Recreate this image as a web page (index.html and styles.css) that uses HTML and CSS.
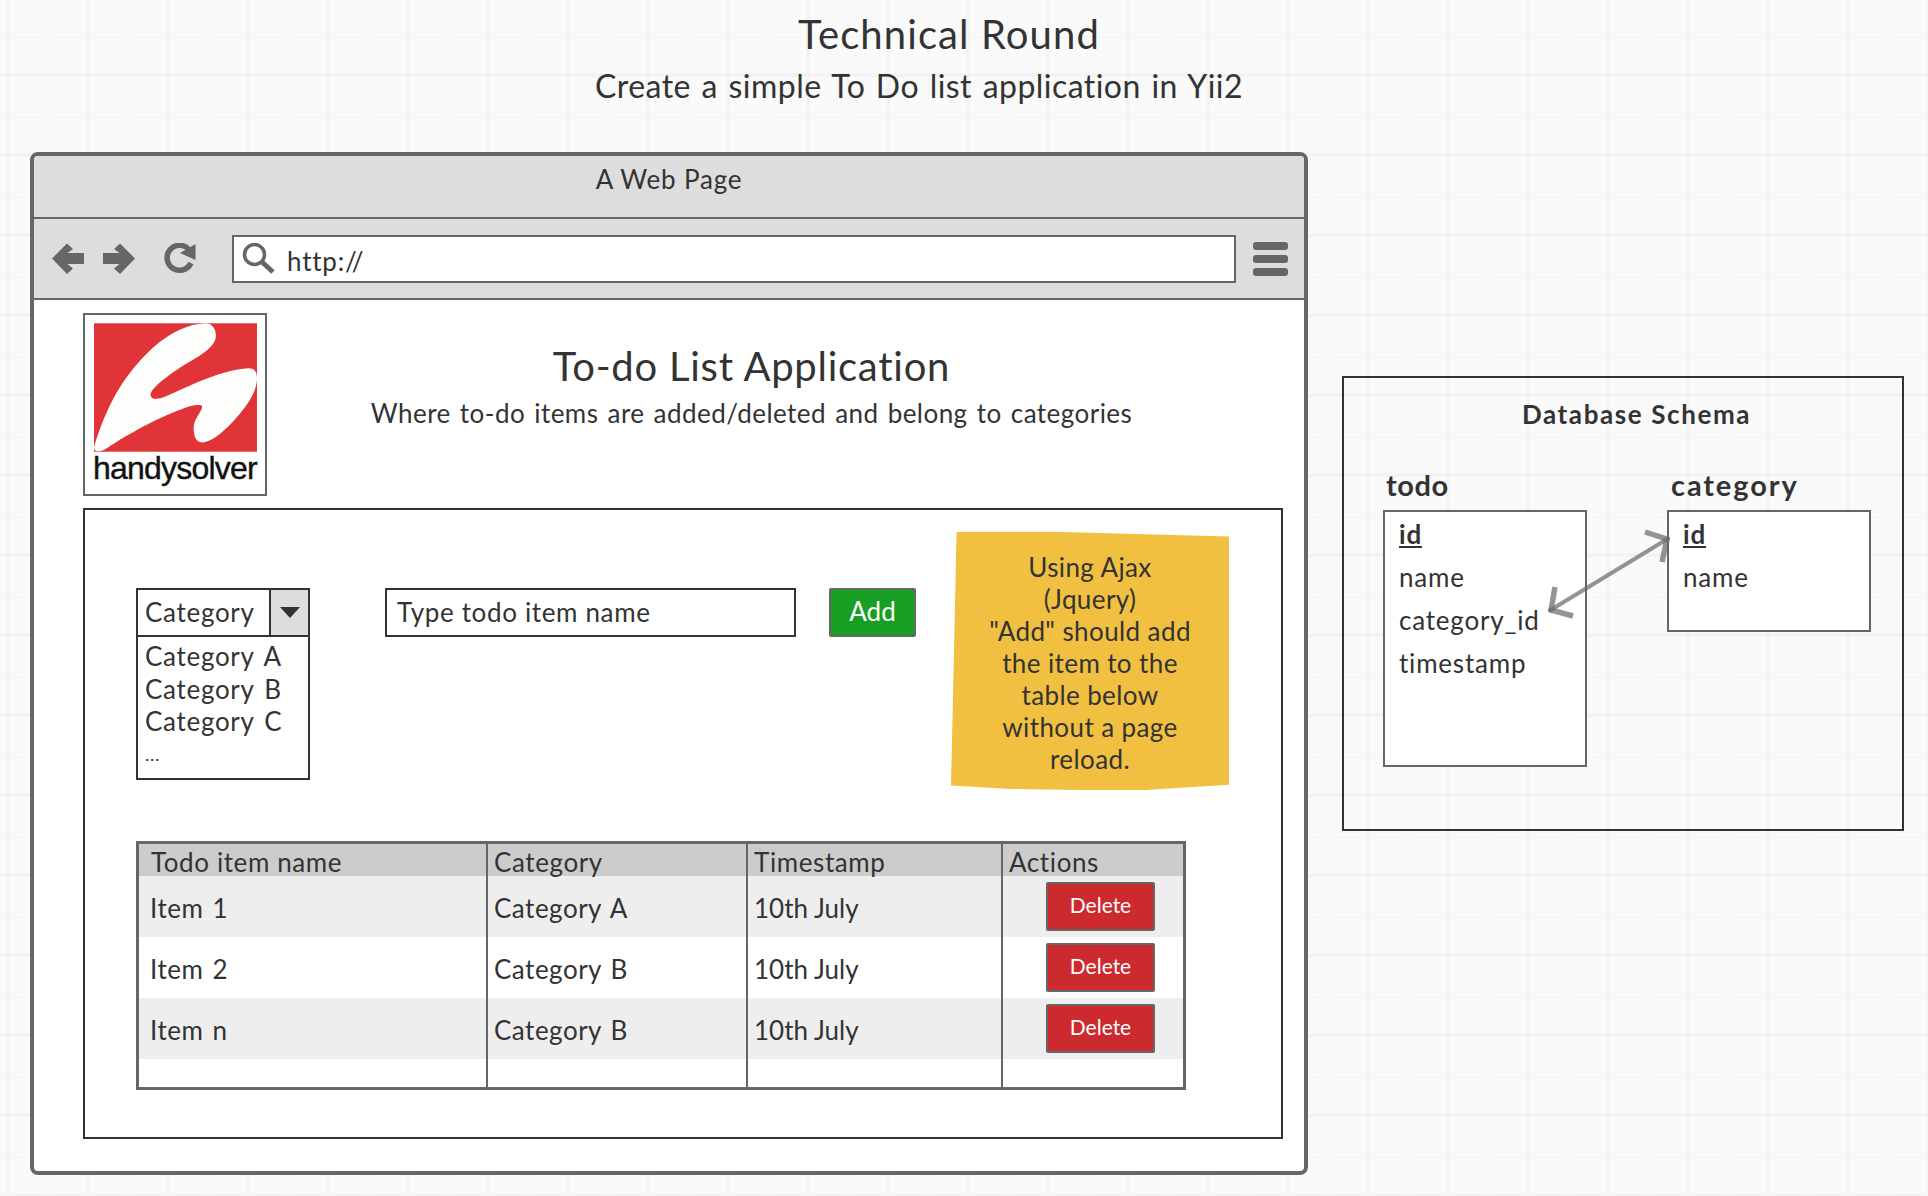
FILE: index.html
```html
<!DOCTYPE html>
<html lang="en">
<head>
    <meta charset="UTF-8">
    <title>Technical Round</title>
    <link rel="stylesheet" href="styles.css">
</head>
<body>
    <header class="brief">
        <h1 class="brief-title">Technical Round</h1>
        <p class="brief-sub">Create a simple To Do list application in Yii2</p>
    </header>

    <main class="board">
        <section class="window">
            <div class="window-title">A Web Page</div>
            <div class="toolbar">
                <svg class="tool-icon tool-back" viewBox="0 0 32 31"><path d="M0 15.500 15 .5 21 6 15.500 10H32V21H15.500L21 25.500 15 31Z"/></svg>
                <svg class="tool-icon tool-forward" viewBox="0 0 32 31"><path d="M32 15.500 17 .5 11 6 16.500 10H0V21H16.500L11 25.500 17 31Z"/></svg>
                <svg class="tool-icon tool-reload" viewBox="0 0 32 31">
                    <path class="reload-arc" d="M25 6.500A12.500 12.500 0 1 0 27 20"/>
                    <path d="M31.500 1V17L16 10Z"/>
                </svg>
                <div class="address">
                    <svg class="search-icon" viewBox="0 0 33 31">
                        <circle cx="12.500" cy="11.500" r="10"/>
                        <path d="M20 19 31 29"/>
                    </svg>
                    <span>http://</span>
                </div>
                <div class="burger"><i></i><i></i><i></i></div>
            </div>

            <div class="page">
                <div class="hero">
                    <div class="logo">
                        <svg class="logo-mark" viewBox="0 0 490 386">
                            <rect width="490" height="386" fill="#e13438"/>
                            <path fill="#fdfdfb" d="M0 373C20 300 60 210 105 153C150 95 230 5 335 0C360 0 370 25 365 48C355 80 300 108 275 123C235 148 175 190 170 213C170 228 185 230 205 224C255 205 370 140 465 135C482 135 490 145 490 165C490 215 445 265 415 298C385 330 350 358 325 358C305 358 298 335 300 308C305 280 325 265 325 250C325 243 300 245 285 250C220 272 120 320 35 378C20 386 0 390 0 373Z"/>
                        </svg>
                        <div class="logo-name">handysolver</div>
                    </div>
                    <div class="hero-text">
                        <h2 class="hero-title">To-do List Application</h2>
                        <p class="hero-sub">Where to-do items are added/deleted and belong to categories</p>
                    </div>
                </div>

                <div class="panel">
                    <div class="form-row">
                        <div class="select">
                            <div class="select-head">
                                <span class="select-label">Category</span>
                                <span class="select-btn"><b class="caret"></b></span>
                            </div>
                            <ul class="select-list">
                                <li>Category A</li>
                                <li>Category B</li>
                                <li>Category C</li>
                                <li class="more">...</li>
                            </ul>
                        </div>
                        <div class="todo-input">Type todo item name</div>
                        <div class="add-btn">Add</div>
                        <div class="note">Using Ajax<br>(Jquery)<br>"Add" should add<br>the item to the<br>table below<br>without a page<br>reload.</div>
                    </div>

                    <table class="items">
                        <thead>
                            <tr>
                                <th class="col-name">Todo item name</th>
                                <th class="col-cat">Category</th>
                                <th class="col-time">Timestamp</th>
                                <th>Actions</th>
                            </tr>
                        </thead>
                        <tbody>
                            <tr class="odd">
                                <td>Item 1</td><td>Category A</td><td class="date">10th July</td>
                                <td class="action"><span class="del-btn">Delete</span></td>
                            </tr>
                            <tr>
                                <td>Item 2</td><td>Category B</td><td class="date">10th July</td>
                                <td class="action"><span class="del-btn">Delete</span></td>
                            </tr>
                            <tr class="odd">
                                <td>Item n</td><td>Category B</td><td class="date">10th July</td>
                                <td class="action"><span class="del-btn">Delete</span></td>
                            </tr>
                            <tr class="blank"><td></td><td></td><td></td><td></td></tr>
                        </tbody>
                    </table>
                </div>
            </div>
        </section>

        <section class="schema">
            <h3 class="schema-title">Database Schema</h3>
            <div class="schema-tables">
                <div>
                    <h4 class="entity-name">todo</h4>
                    <ul class="entity entity-todo">
                        <li class="key">id</li>
                        <li>name</li>
                        <li>category_id</li>
                        <li>timestamp</li>
                    </ul>
                </div>
                <div>
                    <h4 class="entity-name wide">category</h4>
                    <ul class="entity entity-category">
                        <li class="key">id</li>
                        <li>name</li>
                    </ul>
                </div>
            </div>
            <!-- relation line sits over both tables -->
            <svg class="relation" viewBox="0 0 560 453">
                <path class="relation-line" d="M205 233 325 160"/>
                <path class="relation-head" d="M301 154 323 161 318 184M211 209 207 232 229 238"/>
            </svg>
        </section>
    </main>
</body>
</html>
```

FILE: styles.css
```css
*{
    margin: 0;
    padding: 0;
    box-sizing: border-box;
}
li{
    list-style: none;
}
body{
    width: 1928px;
    height: 1196px;
    overflow: hidden;
    font-family: Lato, "Noto Sans", sans-serif;
    font-size: 26px;
    color: #333;
    background-color: #fafafa;
    /*board grid: thick and thin lines, both every 80px*/
    background-image:
        linear-gradient(to right, #f3f3f3 4px, transparent 4px),
        linear-gradient(to bottom, #f3f3f3 4px, transparent 4px),
        linear-gradient(to right, #f6f6f6 2px, transparent 2px),
        linear-gradient(to bottom, #f6f6f6 2px, transparent 2px);
    background-size: 80px 80px;
    background-position: 6px 0, 0 73px, 47px 0, 0 36px;
}

/* heading above the board */
.brief{
    width: 1838px;
    height: 152px;
    padding-top: 9px;
    text-align: center;
}
.brief-title{
    padding-left: 60px;
    font-size: 40px;
    font-weight: 400;
    line-height: 50px;
    letter-spacing: 1.100px;
}
.brief-sub{
    margin-top: 3px;
    font-size: 32px;
    line-height: 48px;
    letter-spacing: .45px;
    word-spacing: 2px;
}

.board{
    display: flex;
    align-items: flex-start;
    padding-left: 30px;
}

/* browser window */
.window{
    display: flex;
    flex-direction: column;
    width: 1278px;
    height: 1023px;
    border: 4px solid #666;
    border-radius: 8px;
    background: #fff;
    overflow: hidden;
}
.window-title{
    height: 63px;
    padding-top: 7px;
    border-bottom: 2px solid #666;
    background: #ddd;
    text-align: center;
    line-height: 32px;
    letter-spacing: .8px;
}
.toolbar{
    display: flex;
    align-items: center;
    height: 81px;
    padding-left: 18px;
    border-bottom: 2px solid #666;
    background: #ddd;
}
.tool-icon{
    flex: none;
    width: 32px;
    height: 31px;
    fill: #666;
}
.tool-forward{
    margin-left: 19px;
}
.tool-reload{
    margin-left: 29px;
}
.reload-arc{
    fill: none;
    stroke: #666;
    stroke-width: 5.500px;
}
.address{
    display: flex;
    align-items: center;
    width: 1004px;
    height: 48px;
    margin-left: 36px;
    padding-left: 8px;
    border: 2px solid #666;
    background: #fff;
    letter-spacing: .8px;
}
.address span{
    margin-left: 12px;
    padding-top: 5px;
}
.search-icon{
    width: 33px;
    height: 31px;
    fill: none;
    stroke: #666;
    stroke-width: 3.500px;
}
.search-icon path{
    stroke-width: 5px;
}
.burger{
    display: flex;
    flex-direction: column;
    gap: 5px;
    margin-left: 17px;
}
.burger i{
    display: block;
    width: 35px;
    height: 8px;
    border-radius: 3px;
    background: #666;
}

/* page inside the browser */
.page{
    flex: 1;
    padding: 13px 21px 0 49px;
}
.hero{
    display: flex;
    height: 183px;
}
.logo{
    flex: none;
    width: 184px;
    height: 183px;
    padding: 8px 9px 0;
    border: 2px solid #666;
}
.logo-mark{
    display: block;
    width: 163px;
    height: 129px;
}
.logo-name{
    margin: -2px 0 0 -1px;
    font-family: "Liberation Sans", sans-serif;
    font-size: 32px;
    line-height: 36px;
    letter-spacing: -.8px;
    color: #111;
    -webkit-text-stroke: .4px #111;
    white-space: nowrap;
}
.hero-text{
    width: 969px;
    padding-top: 28px;
    text-align: center;
}
.hero-title{
    font-size: 40px;
    font-weight: 400;
    line-height: 50px;
    letter-spacing: .75px;
}
.hero-sub{
    margin-top: 6px;
    line-height: 32px;
    letter-spacing: .46px;
    word-spacing: 2px;
}

.panel{
    height: 631px;
    margin-top: 12px;
    padding: 22px 0 0 51px;
    border: 2px solid #333;
}
.form-row{
    display: flex;
    align-items: flex-start;
}
.select{
    width: 174px;
    height: 192px;
    margin-top: 56px;
    border: 2px solid #333;
    background: #fff;
}
.select-head{
    display: flex;
    height: 47px;
    border-bottom: 2px solid #333;
}
.select-label{
    flex: 1;
    padding-left: 7px;
    line-height: 44px;
    letter-spacing: .7px;
}
.select-btn{
    display: flex;
    align-items: center;
    justify-content: center;
    flex: none;
    width: 39px;
    border-left: 2px solid #333;
    background: #ddd;
}
.caret{
    width: 0;
    height: 0;
    border-left: 10px solid transparent;
    border-right: 10px solid transparent;
    border-top: 11px solid #333;
}
.select-list{
    padding: 3px 0 0 7px;
    line-height: 32.500px;
    letter-spacing: .7px;
    word-spacing: 3px;
}
.select-list .more{
    font-size: 18px;
}
.todo-input{
    width: 411px;
    height: 49px;
    margin: 56px 0 0 75px;
    padding-left: 10px;
    border: 2px solid #333;
    background: #fff;
    line-height: 45px;
    letter-spacing: .65px;
}
.add-btn{
    width: 87px;
    height: 49px;
    margin: 56px 0 0 33px;
    border: 2px solid #666;
    border-radius: 2px;
    background: #169f23;
    color: #fff;
    text-align: center;
    line-height: 42px;
}
.note{
    width: 278px;
    height: 258px;
    margin-left: 35px;
    padding-top: 19px;
    background: #f1c040;
    text-align: center;
    line-height: 32px;
    letter-spacing: .4px;
    /*hand drawn sticky note edge*/
    clip-path: polygon(2% 0, 40% 0, 100% 1.700%, 100% 50%, 100% 98%, 70% 100%, 45% 100%, 20% 99.500%, 0 98.300%, 1% 50%);
}

.items{
    width: 1050px;
    margin-top: 51px;
    border: 3px solid #666;
    border-spacing: 0;
    table-layout: fixed;
    background: #fff;
}
.items th,
.items td{
    padding: 0 0 0 6px;
    text-align: left;
    font-weight: 400;
}
.items th + th,
.items td + td{
    border-left: 2px solid #666;
}
.items th{
    height: 32px;
    padding-top: 3px;
    background: #ccc;
    line-height: 26px;
    letter-spacing: .6px;
}
.items td{
    height: 61px;
    padding-top: 2px;
    line-height: 30px;
    letter-spacing: .5px;
    word-spacing: 2px;
}
.items td.date{
    letter-spacing: 0;
    word-spacing: 0;
}
.items .col-name{
    width: 347px;
    padding-left: 12px;
}
.col-cat{
    width: 260px;
}
.col-time{
    width: 255px;
}
.items td:first-child{
    padding-left: 11px;
}
.items .odd td{
    background: #eee;
}
.items .blank td{
    height: 28px;
}
.items td.action{
    padding: 6px 28px 0 0;
    vertical-align: top;
    text-align: right;
}
.del-btn{
    display: inline-block;
    width: 109px;
    height: 49px;
    border: 2px solid #666;
    border-radius: 2px;
    background: #cc2a2e;
    color: #fff;
    text-align: center;
    font-size: 21px;
    line-height: 42px;
    letter-spacing: 0;
    vertical-align: top;
}

/* database schema panel */
.schema{
    position: relative;
    flex: none;
    width: 562px;
    height: 455px;
    margin: 224px 0 0 34px;
    border: 2px solid #333;
}
.schema-title{
    margin-top: 19px;
    padding-left: 27px;
    text-align: center;
    font-size: 26px;
    font-weight: 700;
    line-height: 34px;
    letter-spacing: 1.600px;
}
.schema-tables{
    display: flex;
    gap: 80px;
    margin-top: 35px;
    padding-left: 39px;
}
.entity-name{
    height: 44px;
    padding-left: 3px;
    font-size: 29px;
    font-weight: 700;
    line-height: 38px;
    letter-spacing: .6px;
}
.entity-name.wide{
    padding-left: 4px;
    letter-spacing: 1.900px;
}
.entity{
    width: 204px;
    padding: 1px 0 0 14px;
    border: 2px solid #666;
    background: #fff;
    line-height: 43px;
    letter-spacing: .8px;
}
.entity-todo{
    height: 257px;
}
.entity-category{
    height: 122px;
}
.key{
    font-weight: 700;
    text-decoration: underline;
}
.relation{
    position: absolute;
    left: 0;
    top: 0;
    width: 560px;
    height: 453px;
    fill: none;
}
.relation-line{
    stroke: rgba(102, 102, 102, .7);
    stroke-width: 4px;
}
.relation-head{
    stroke: rgba(102, 102, 102, .7);
    stroke-width: 5.500px;
}
```
